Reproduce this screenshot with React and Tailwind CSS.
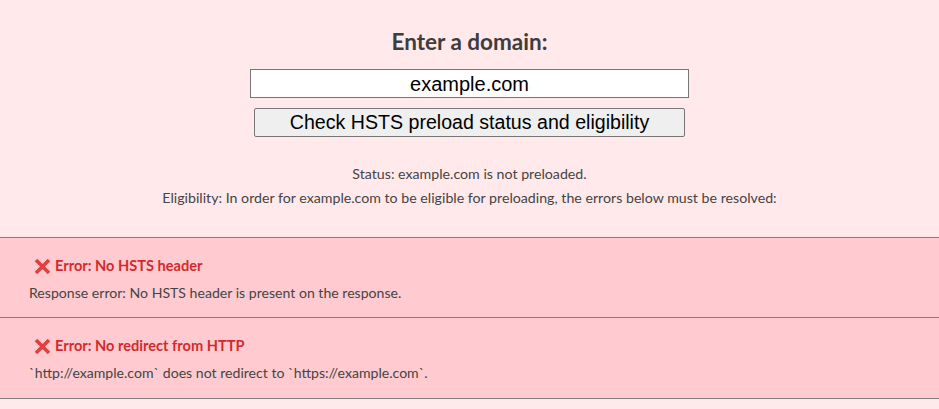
export default function App() {
  const errors = [
    { title: 'Error: No HSTS header', body: 'Response error: No HSTS header is present on the response.', h: 'h-[80px]' },
    { title: 'Error: No redirect from HTTP', body: '`http://example.com` does not redirect to `https://example.com`.', h: 'h-[81px]' },
  ]
  return (
    <div className="min-h-[409px] bg-[#ffe9eb] font-['Lato',sans-serif] text-[#444]">
      <div className="flex flex-col items-center pt-[28px]">
        <h2 className="text-[22.5px] font-bold leading-[27px] text-[#3d3d3d]">Enter a domain:</h2>
        <input
          className="mt-[14px] h-[29px] w-[439px] border border-[#767676] bg-white text-center font-['Liberation_Sans',sans-serif] text-[20px] text-black outline-none"
          defaultValue="example.com"
        />
        <button className="mt-[10px] h-[29px] w-[431px] rounded-[2px] border border-[#767676] bg-[#efefef] font-['Liberation_Sans',sans-serif] text-[19.6px] leading-none text-black">
          Check HSTS preload status and eligibility
        </button>
        <p className="mt-[25px] text-[14.2px] leading-[24px]">Status: example.com is not preloaded.</p>
        <p className="text-[14.2px] leading-[24px]">
          Eligibility: In order for example.com to be eligible for preloading, the errors below must be resolved:
        </p>
      </div>
      <div className="mt-[27px] border-t border-[#808080]">
        {errors.map((e) => (
          <div key={e.title} className={`${e.h} border-b border-[#808080] bg-[#ffcbd0] px-[29px] pt-[18px]`}>
            <div className="flex items-center gap-[4px] pl-[5px] text-[14.6px] font-bold leading-[20px] text-[#d12b2e]">
              <svg width="17" height="17" viewBox="0 0 17 17">
                <path d="M2 2 L15 15 M15 2 L2 15" stroke="#e0403f" strokeWidth="3.6" strokeLinecap="butt" />
              </svg>
              <span>{e.title}</span>
            </div>
            <p className="mt-[8px] text-[14.1px] leading-[18px] text-[#444]">{e.body}</p>
          </div>
        ))}
      </div>
    </div>
  )
}
